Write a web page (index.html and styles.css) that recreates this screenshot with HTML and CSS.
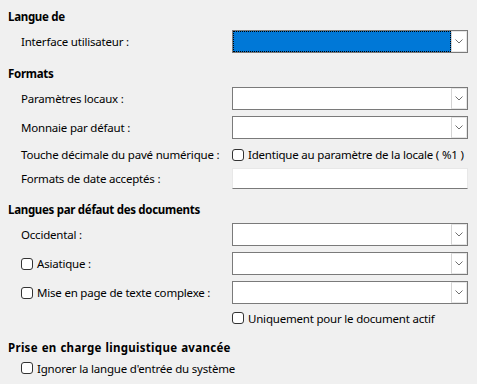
FILE: index.html
```html
<!DOCTYPE html>
<html lang="fr">
<head>
<meta charset="utf-8">
<link rel="stylesheet" href="styles.css">
</head>
<body>
<div class="page">
  <div class="heading h1">Langue de</div>
  <div class="row r-ui">
    <div class="label">Interface utilisateur :</div>
    <div class="combo focused"><div class="field"><div class="sel"></div></div><div class="btn"><svg width="8" height="5" viewBox="0 0 8 5"><path d="M0.5 0.5 L4 4 L7.5 0.5" fill="none" stroke="#707070" stroke-width="1"/></svg></div></div>
  </div>

  <div class="heading h2">Formats</div>
  <div class="row r-loc">
    <div class="label">Paramètres locaux :</div>
    <div class="combo"><div class="field"></div><div class="btn"><svg width="8" height="5" viewBox="0 0 8 5"><path d="M0.5 0.5 L4 4 L7.5 0.5" fill="none" stroke="#707070" stroke-width="1"/></svg></div></div>
  </div>
  <div class="row r-cur">
    <div class="label">Monnaie par défaut :</div>
    <div class="combo"><div class="field"></div><div class="btn"><svg width="8" height="5" viewBox="0 0 8 5"><path d="M0.5 0.5 L4 4 L7.5 0.5" fill="none" stroke="#707070" stroke-width="1"/></svg></div></div>
  </div>
  <div class="row r-dec">
    <div class="label">Touche décimale du pavé numérique :</div>
    <label class="check"><span class="box"></span><span>Identique au paramètre de la locale ( %1 )</span></label>
  </div>
  <div class="row r-date">
    <div class="label">Formats de date acceptés :</div>
    <div class="entry"></div>
  </div>

  <div class="heading h3">Langues par défaut des documents</div>
  <div class="row r-occ">
    <div class="label">Occidental :</div>
    <div class="combo"><div class="field"></div><div class="btn"><svg width="8" height="5" viewBox="0 0 8 5"><path d="M0.5 0.5 L4 4 L7.5 0.5" fill="none" stroke="#707070" stroke-width="1"/></svg></div></div>
  </div>
  <div class="row r-asi">
    <label class="check label"><span class="box"></span><span>Asiatique :</span></label>
    <div class="combo"><div class="field"></div><div class="btn"><svg width="8" height="5" viewBox="0 0 8 5"><path d="M0.5 0.5 L4 4 L7.5 0.5" fill="none" stroke="#707070" stroke-width="1"/></svg></div></div>
  </div>
  <div class="row r-ctl">
    <label class="check label"><span class="box"></span><span>Mise en page de texte complexe :</span></label>
    <div class="combo"><div class="field"></div><div class="btn"><svg width="8" height="5" viewBox="0 0 8 5"><path d="M0.5 0.5 L4 4 L7.5 0.5" fill="none" stroke="#707070" stroke-width="1"/></svg></div></div>
  </div>
  <div class="row r-only">
    <div class="label"></div>
    <label class="check"><span class="box"></span><span>Uniquement pour le document actif</span></label>
  </div>

  <div class="heading h4">Prise en charge linguistique avancée</div>
  <div class="row r-ign">
    <label class="check label wide"><span class="box"></span><span>Ignorer la langue d'entrée du système</span></label>
  </div>
</div>
</body>
</html>
```

FILE: styles.css
```css
html, body {
  margin: 0;
  padding: 0;
  background: #f0f0f0;
}
body {
  width: 477px;
  height: 384px;
  overflow: hidden;
  font-family: "Noto Sans", "Open Sans", sans-serif;
  font-size: 11.5px;
  letter-spacing: -0.2px;
  color: #000;
}
.page {
  display: flex;
  flex-direction: column;
  padding-top: 9px;
}
.heading {
  height: 16px;
  line-height: 16px;
  padding-left: 8px;
  font-weight: bold;
  white-space: nowrap;
  letter-spacing: -0.3px;
}
.h2 { margin-top: 13px; }
.h3 { margin-top: 13px; }
.h4 { margin-top: 12px; letter-spacing: 0.3px; word-spacing: 0.5px; }

.row {
  display: flex;
  align-items: center;
  white-space: nowrap;
}
.r-ui { margin-top: 5px; height: 23px; }
.r-loc { margin-top: 5px; height: 23px; }
.r-cur { margin-top: 6px; height: 23px; }
.r-dec { margin-top: 5px; height: 21px; }
.r-date { margin-top: 3px; height: 21px; }
.r-occ { margin-top: 5px; height: 23px; }
.r-asi { margin-top: 6px; height: 23px; }
.r-ctl { margin-top: 6px; height: 23px; }
.r-only { margin-top: 4px; height: 20px; }
.r-ign { margin-top: 2px; height: 20px; }

.label {
  width: 211px;
  padding-left: 21px;
  flex: none;
}
.label.wide { width: auto; }

.combo {
  width: 236px;
  height: 23px;
  box-sizing: border-box;
  border: 1px solid #7a7a7a;
  background: #fff;
  display: flex;
}
.field {
  flex: 1;
  padding: 1px;
  display: flex;
}
.btn {
  width: 16px;
  box-sizing: border-box;
  border: 1px solid #e6e6e6;
  border-left-color: #d4d4d4;
  display: flex;
  align-items: center;
  justify-content: center;
  background: #fff;
}
.combo.focused .field { padding: 0; }
.sel {
  flex: 1;
  background: #0078d7;
  outline: 1px dotted #000;
  outline-offset: -1px;
}

.entry {
  width: 236px;
  height: 21px;
  box-sizing: border-box;
  background: #fff;
  border: 1px solid #e8e8e8;
  border-bottom: 1px solid #7a7a7a;
}

.check {
  display: flex;
  align-items: center;
  gap: 4px;
}
.box {
  width: 12px;
  height: 12px;
  box-sizing: border-box;
  border: 1px solid #333;
  border-radius: 3px;
  background: #fff;
  flex: none;
}
```
